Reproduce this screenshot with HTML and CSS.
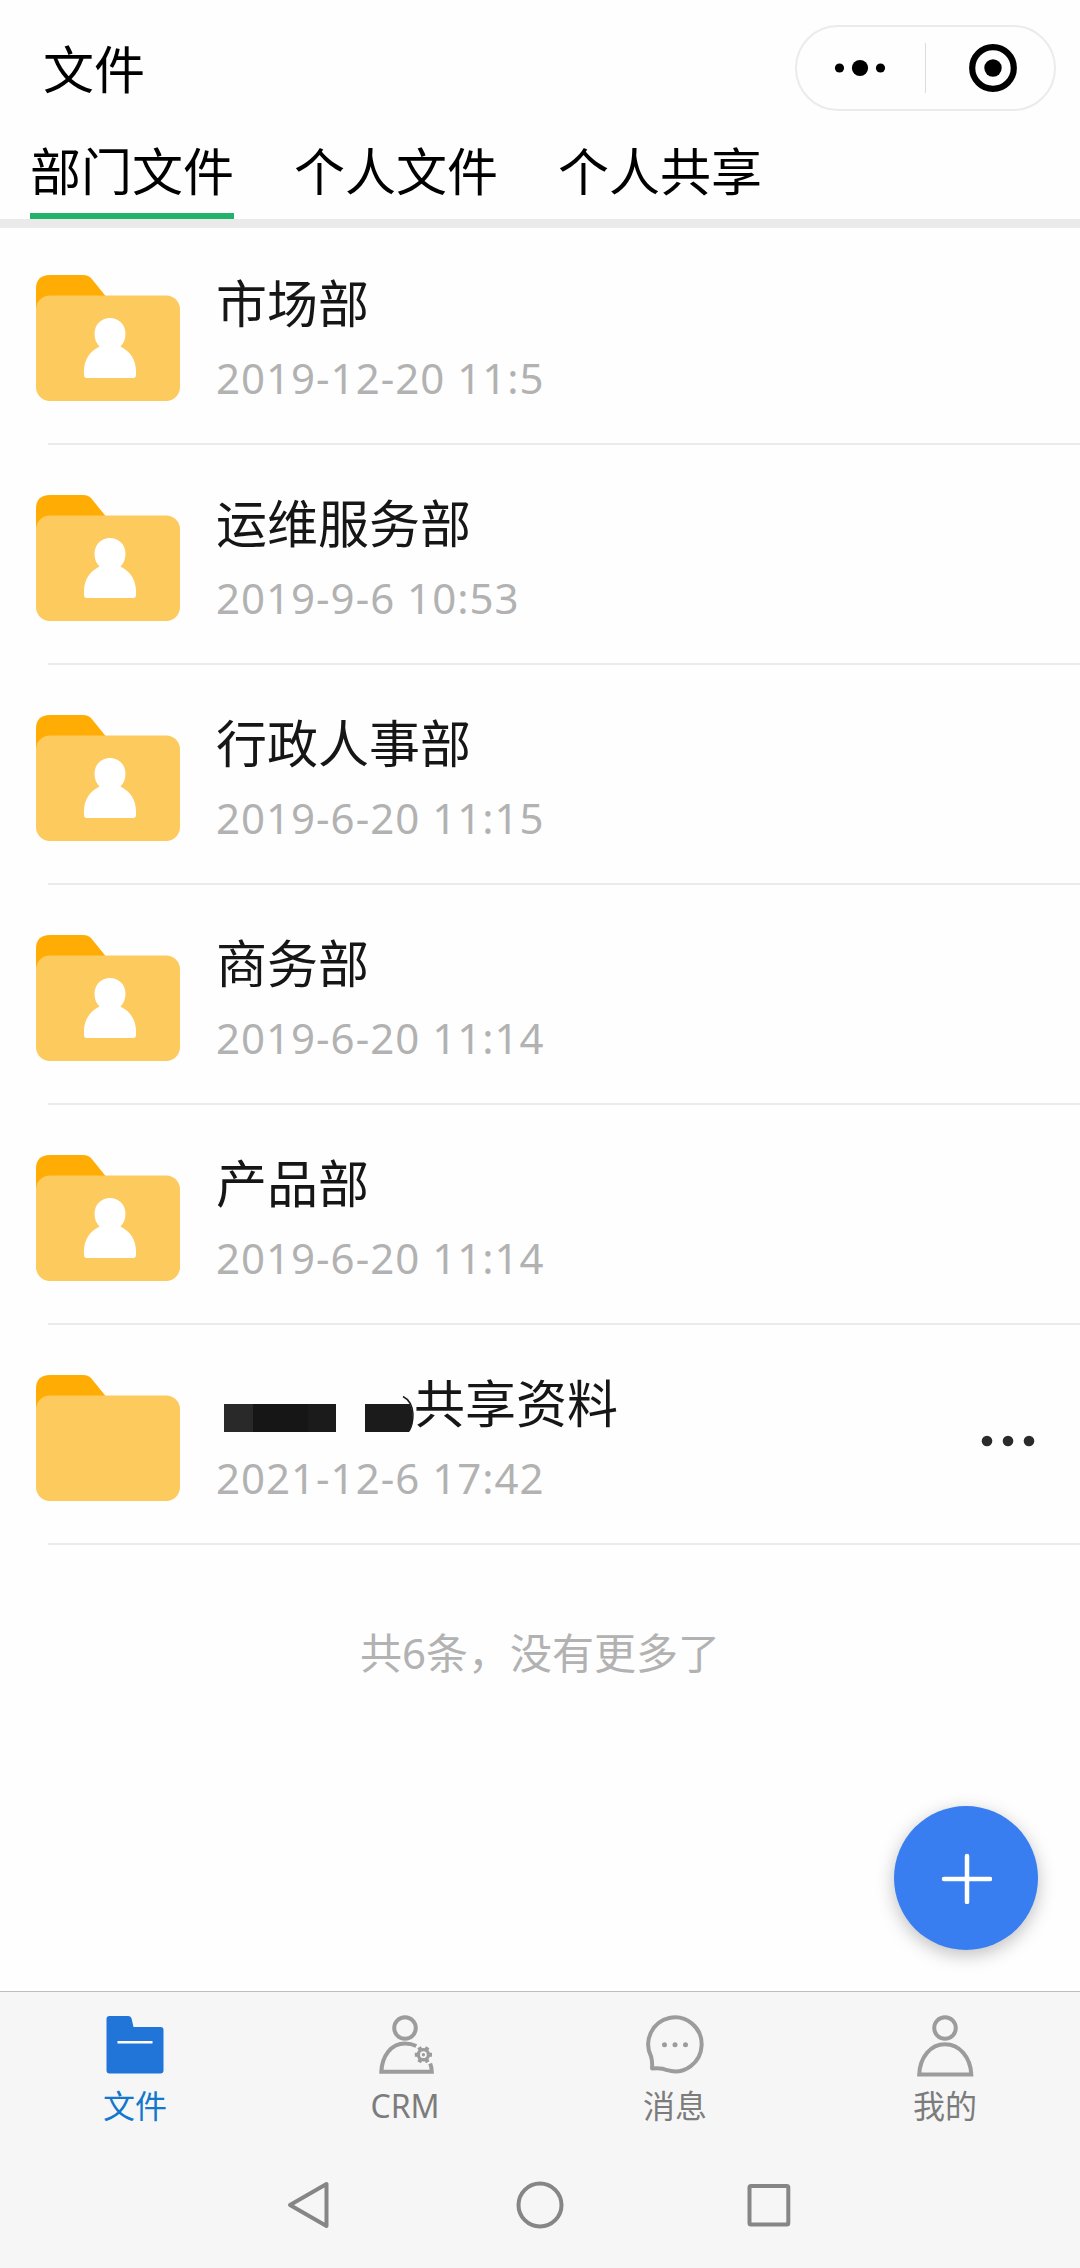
FILE: index.html
```html
<!DOCTYPE html>
<html lang="zh-CN">
<head>
  <meta charset="UTF-8">
  <meta name="viewport" content="width=device-width, initial-scale=1.0">
  <title>文件</title>
  <link rel="stylesheet" href="styles.css">
</head>
<body>
  <!-- 图标 -->
  <svg class="symbols">
    <symbol id="folder" viewBox="0 0 144 126">
      <path d="M0 34V14Q0 0 14 0H47Q52 0 55 3L72 24V40H0Z" fill="#ffac05"/>
      <rect y="20.500" width="144" height="105.500" rx="14" fill="#fdca5e"/>
    </symbol>
    <symbol id="person" viewBox="0 0 52 60">
      <path d="M26 0C35 0 41.500 7 41.500 15.500C41.500 21 40 25 36.500 28.500C46 33 52 42 52 53V57Q52 60 49 60H3Q0 60 0 57V53C0 42 6 33 15.500 28.500C12 25 10.500 21 10.500 15.500C10.500 7 17 0 26 0Z" fill="#fff"/>
    </symbol>
  </svg>

  <header class="header">
    <h1 class="title">文件</h1>
    <div class="capsule">
      <svg class="capsule-more" viewBox="0 0 52 20">
        <circle cx="5.500" cy="10" r="4.600"/><circle cx="26" cy="10" r="8.100"/><circle cx="46.500" cy="10" r="4.600"/>
      </svg>
      <span class="capsule-line"></span>
      <svg class="capsule-close" viewBox="0 0 50 50">
        <circle cx="25" cy="25" r="20.800" fill="none" stroke="#000" stroke-width="6.200"/>
        <circle cx="25" cy="25" r="8.700"/>
      </svg>
    </div>
  </header>

  <nav class="tabs">
    <a class="tab active">部门文件</a>
    <a class="tab">个人文件</a>
    <a class="tab">个人共享</a>
  </nav>

  <main class="content">
    <ul class="list">
      <li class="item">
        <div class="folder"><svg><use href="#folder"/></svg><svg class="person"><use href="#person"/></svg></div>
        <div class="info"><div class="name">市场部</div><div class="date">2019-12-20 11:5</div></div>
      </li>
      <li class="item">
        <div class="folder"><svg><use href="#folder"/></svg><svg class="person"><use href="#person"/></svg></div>
        <div class="info"><div class="name">运维服务部</div><div class="date">2019-9-6 10:53</div></div>
      </li>
      <li class="item">
        <div class="folder"><svg><use href="#folder"/></svg><svg class="person"><use href="#person"/></svg></div>
        <div class="info"><div class="name">行政人事部</div><div class="date">2019-6-20 11:15</div></div>
      </li>
      <li class="item">
        <div class="folder"><svg><use href="#folder"/></svg><svg class="person"><use href="#person"/></svg></div>
        <div class="info"><div class="name">商务部</div><div class="date">2019-6-20 11:14</div></div>
      </li>
      <li class="item">
        <div class="folder"><svg><use href="#folder"/></svg><svg class="person"><use href="#person"/></svg></div>
        <div class="info"><div class="name">产品部</div><div class="date">2019-6-20 11:14</div></div>
      </li>
      <li class="item">
        <div class="folder"><svg><use href="#folder"/></svg></div>
        <div class="info">
          <div class="name">
            <svg class="mask" viewBox="0 0 198 50">
              <rect x="8" y="20" width="29" height="28" fill="#292929"/>
              <rect x="37" y="20" width="55" height="28" fill="#161616"/>
              <rect x="92" y="20" width="28" height="28" fill="#1b1b1b"/>
              <path d="M149 20H194Q200 34 193 48H149Z" fill="#1b1b1b"/>
              <path d="M187 12.500Q196 17 197 30Q197 41 193 47" fill="none" stroke="#1b1b1b" stroke-width="1.500"/>
            </svg>共享资料</div>
          <div class="date">2021-12-6 17:42</div>
        </div>
        <svg class="more" viewBox="0 0 54 12">
          <circle cx="6" cy="6" r="5.300"/><circle cx="27" cy="6" r="5.300"/><circle cx="48" cy="6" r="5.300"/>
        </svg>
      </li>
    </ul>
    <p class="end">共6条，没有更多了</p>
    <button class="add">
      <svg viewBox="0 0 52 52"><path d="M27 4V50M4 27H50" stroke="#fff" stroke-width="4.500" stroke-linecap="round"/></svg>
    </button>
  </main>

  <footer class="footer">
    <nav class="tabbar">
      <a class="tabbar-item active">
        <svg viewBox="0 0 64 64">
          <path d="M6.500 3H25.500Q28 3 28.600 5.500L30.500 14H57.500Q60.500 14 60.500 17V57.500Q60.500 60.500 57.500 60.500H6.500Q3.500 60.500 3.500 57.500V6Q3.500 3 6.500 3Z" fill="#2175d9"/>
          <path d="M14.500 29.300H49.500" stroke="#fff" stroke-width="2.600"/>
        </svg>
        <span>文件</span>
      </a>
      <a class="tabbar-item">
        <svg viewBox="0 0 64 64" fill="none" stroke="#9c9c9c" stroke-width="4">
          <circle cx="32" cy="15" r="10.800"/>
          <path d="M43.300 33Q38 30.500 32 30.500C18 30.500 9 43 8.300 58.800H58.800Q58.600 54 57.200 50.500"/>
          <circle cx="50.400" cy="41.700" r="5.100" stroke-width="3.400"/>
          <circle cx="50.400" cy="41.700" r="1.700" fill="#9c9c9c" stroke="none"/>
          <path d="M56 41.700H59M44.800 41.700H41.800M53.200 46.500L54.700 49.200M47.600 46.500L46.100 49.200M53.200 36.900L54.700 34.200M47.600 36.900L46.100 34.200" stroke-width="4"/>
        </svg>
        <span>CRM</span>
      </a>
      <a class="tabbar-item">
        <svg viewBox="0 0 64 64" fill="none" stroke="#9c9c9c" stroke-width="4">
          <path d="M7.300 43.500A26.700 27 0 1 1 23.500 57.200Q18 54.500 8.200 55.400Q8.800 49 7.300 43.500Z" stroke-linejoin="round" transform="translate(.8 0)"/>
          <g fill="#9c9c9c" stroke="none"><circle cx="21.500" cy="31.700" r="2.500"/><circle cx="32" cy="31.700" r="2.500"/><circle cx="42.500" cy="31.700" r="2.500"/></g>
        </svg>
        <span>消息</span>
      </a>
      <a class="tabbar-item">
        <svg viewBox="0 0 64 64" fill="none" stroke="#9c9c9c" stroke-width="4">
          <circle cx="32" cy="15" r="10.800"/>
          <path d="M6.200 61.600C7 44 17.500 31.300 32 31.300S57.500 44 58.300 61.600Z"/>
        </svg>
        <span>我的</span>
      </a>
    </nav>
    <!-- 系统导航键 -->
    <div class="sysnav">
      <svg viewBox="0 0 50 50"><path d="M4 25L40.500 4V46Z"/></svg>
      <svg viewBox="0 0 50 50"><circle cx="25" cy="25" r="21.500"/></svg>
      <svg viewBox="0 0 50 50"><rect x="5.500" y="6" width="38.800" height="38.500" rx="1.500"/></svg>
    </div>
  </footer>
</body>
</html>
```
FILE: styles.css
```css
* {
  box-sizing: border-box;
  margin: 0;
  padding: 0;
}
body {
  display: flex;
  flex-direction: column;
  width: 1080px;
  height: 2268px;
  overflow: hidden;
  background: #fefefe;
  color: #000;
  font-family: "Noto Sans", "Noto Sans CJK SC", sans-serif;
}
.symbols {
  position: absolute;
  width: 0;
  height: 0;
}
.header {
  display: flex;
  justify-content: space-between;
  height: 132px;
  padding: 25px 24px 0 43px;
}
.title {
  font-family: "Noto Sans CJK SC", sans-serif;
  font-size: 51px;
  font-weight: 400;
  line-height: 84px;
}
.capsule {
  display: flex;
  align-items: center;
  width: 261px;
  height: 86px;
  border: 2px solid #ebebeb;
  border-radius: 43px;
}
.capsule-more {
  width: 52px;
  height: 20px;
  margin-left: 37px;
}
.capsule-line {
  width: 1px;
  height: 50px;
  margin-left: 39px;
  background: #dcdcdc;
}
.capsule-close {
  width: 50px;
  height: 50px;
  margin-left: 42px;
}

.tabs {
  display: flex;
  gap: 60px;
  height: 96px;
  padding-left: 30px;
  border-bottom: 9px solid #eaeaea;
}
.tab {
  height: 87px;
  border-bottom: 6px solid transparent;
  font-family: "Noto Sans CJK SC", sans-serif;
  font-size: 51px;
  line-height: 74px;
}
.tab.active { border-bottom-color: #22b26b; }

.content {
  position: relative;
  flex: 1;
}
.list {
  margin-top: -3px;
  list-style: none;
}
.item {
  display: flex;
  position: relative;
  height: 220px;
  padding: 50px 45px 0 36px;
}
.item::after {
  content: "";
  position: absolute;
  left: 48px;
  right: 0;
  bottom: 0;
  height: 2px;
  background: #ebebeb;
}
.folder {
  position: relative;
  width: 144px;
  height: 126px;
}
.folder svg {
  display: block;
  width: 144px;
  height: 126px;
}
.folder .person {
  position: absolute;
  left: 48px;
  top: 43px;
  width: 52px;
  height: 60px;
}
.info {
  flex: 1;
  margin-left: 36px;
}
.name {
  display: flex;
  height: 50px;
  color: #161616;
  font-family: "Noto Sans CJK SC", sans-serif;
  font-size: 51px;
  line-height: 52px;
}
.mask {
  width: 198px;
  height: 50px;
  margin-top: 9px;
}
.date {
  margin-top: 28px;
  color: #b2b2b2;
  font-size: 42px;
  line-height: 50px;
  letter-spacing: 1px;
}
.more {
  width: 54px;
  height: 12px;
  margin-top: 60px;
  fill: #2b2b2b;
}
.end {
  margin-top: 78px;
  color: #b2b2b2;
  font-size: 42px;
  line-height: 60px;
  text-align: center;
}
.add {
  display: flex;
  align-items: center;
  justify-content: center;
  position: absolute;
  right: 42px;
  bottom: 41px;
  width: 144px;
  height: 144px;
  border: none;
  border-radius: 50%;
  background: #387ef1;
  box-shadow: 0 5px 18px rgba(0, 0, 0, 0.25);
}
.add svg {
  width: 52px;
  height: 52px;
}

.footer {
  height: 277px;
  border-top: 1px solid #bfbfbf;
  background: #f6f6f6;
}
.tabbar {
  display: flex;
  height: 150px;
}
.tabbar-item {
  display: flex;
  flex: 1;
  flex-direction: column;
  align-items: center;
  padding-top: 21px;
  color: #7c7c7c;
  font-size: 32px;
  line-height: 40px;
}
.tabbar-item svg {
  width: 64px;
  height: 64px;
  margin-bottom: 9px;
}
.tabbar-item.active { color: #1377cd; }
.sysnav {
  display: flex;
  justify-content: center;
  gap: 179px;
  padding-top: 38px;
}
.sysnav svg {
  width: 50px;
  height: 50px;
  fill: none;
  stroke: #868686;
  stroke-width: 4;
  stroke-linejoin: round;
}
```
